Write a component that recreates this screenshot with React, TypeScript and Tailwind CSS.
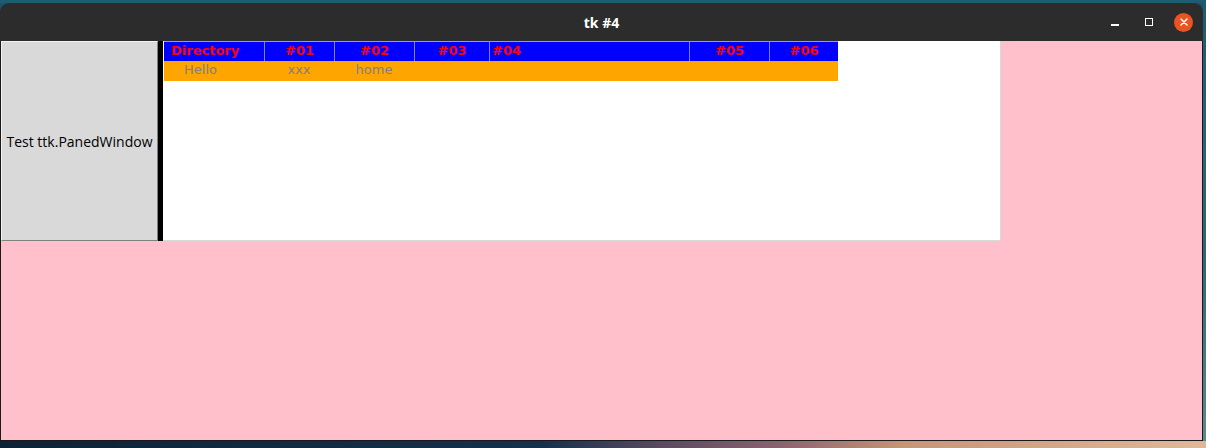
import React from "react";

const columns = [
  { key: "dir", label: "Directory", width: "w-[100px]", head: "justify-start pl-[7px]" },
  { key: "c1", label: "#01", width: "w-[70px]", head: "justify-center" },
  { key: "c2", label: "#02", width: "w-[80px]", head: "justify-center" },
  { key: "c3", label: "#03", width: "w-[75px]", head: "justify-center" },
  { key: "c4", label: "#04", width: "w-[200px]", head: "justify-start pl-[2px]" },
  { key: "c5", label: "#05", width: "w-[80px]", head: "justify-center" },
  { key: "c6", label: "#06", width: "w-[69px]", head: "justify-center" },
];

const row: Record<string, string> = { dir: "Hello", c1: "xxx", c2: "home" };

function TitleBar() {
  return (
    <div className="relative h-[38px] bg-[#2c2c2c] rounded-t-[9px] flex items-center justify-center">
      <span className="text-white font-bold text-[14px] font-['Noto_Sans',sans-serif]">tk #4</span>
      <div className="absolute right-[10px] top-0 h-full flex items-center gap-[16px]">
        <div className="w-[18px] h-[18px] flex items-center justify-center">
          <div className="w-[8px] h-[1.5px] bg-white mt-[6px]" />
        </div>
        <div className="w-[18px] h-[18px] flex items-center justify-center">
          <div className="w-[8px] h-[8px] border border-white" />
        </div>
        <div className="w-[19px] h-[19px] rounded-full bg-[#e95420] flex items-center justify-center">
          <svg width="10" height="10" viewBox="0 0 10 10">
            <path d="M2 2 L8 8 M8 2 L2 8" stroke="white" strokeWidth="1.5" strokeLinecap="round" />
          </svg>
        </div>
      </div>
    </div>
  );
}

function Tree() {
  return (
    <div className="ml-[1px] w-fit font-['DejaVu_Sans',sans-serif] text-[13px]">
      <div className="flex h-[20px] bg-[#0000ff] border-t border-[#a0a0a0]">
        {columns.map((c, i) => (
          <div
            key={c.key}
            className={`${c.width} ${c.head} flex items-center pb-[2px] font-bold text-[#ff0000] leading-none ${i > 0 ? "border-l border-[#8080ff]" : ""}`}
          >
            {c.label}
          </div>
        ))}
      </div>
      <div className="flex h-[20px] bg-[#ffa500] text-[#808080]">
        {columns.map((c) => (
          <div key={c.key} className={`${c.width} flex items-center pb-[4px] leading-none ${c.key === "dir" ? "pl-[20px]" : "justify-center"}`}>
            {row[c.key] ?? ""}
          </div>
        ))}
      </div>
    </div>
  );
}

export default function App() {
  return (
    <div className="w-[1206px] h-[448px] overflow-hidden flex flex-col bg-[#1b5468]">
      <div className="h-[3px] bg-[#1d5d70]" />
      <div className="flex">
        <div className="w-[1203px] h-[438px] flex flex-col">
          <TitleBar />
          <div className="flex-1 bg-[#ffc0cb] border-x border-b border-[#1a1a1a]">
            <div className="flex h-[200px]">
              <div className="w-[157px] bg-[#d9d9d9] border-t border-l border-[#f2f2f2] border-b-[1px] border-b-[#808080] border-r border-r-[#808080] flex items-center justify-center">
                <span className="text-[14px] text-black font-['Open_Sans',sans-serif]">Test ttk.PanedWindow</span>
              </div>
              <div className="w-[5px] bg-black" />
              <div className="w-[838px] bg-white border-r border-b border-[#d9d9d9]">
                <Tree />
              </div>
            </div>
          </div>
        </div>
        <div className="flex-1 bg-[linear-gradient(180deg,#1d5d70_0%,#2a6a78_60%,#5a8a90_100%)]" />
      </div>
      <div className="flex-1 bg-[linear-gradient(90deg,#0e2236_0%,#16304a_45%,#5a4a60_55%,#8a6470_65%,#c89478_75%,#e0b898_100%)]" />
    </div>
  );
}
